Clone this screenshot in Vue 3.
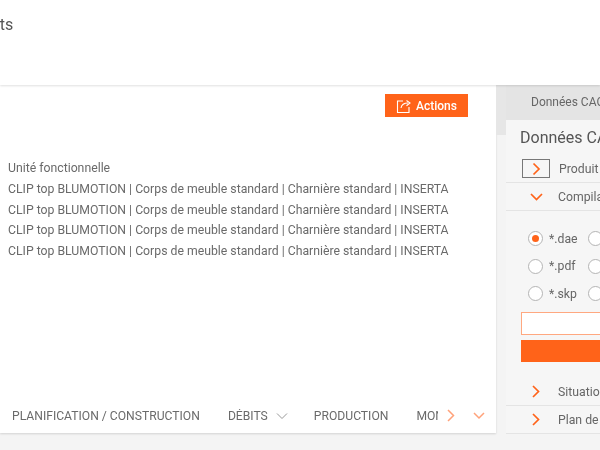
<script setup>
const rows = Array(4).fill('CLIP top BLUMOTION | Corps de meuble standard | Charnière standard | INSERTA')
const formats = ['*.dae', '*.pdf', '*.skp']
</script>

<template>
  <div class="page">
    <header class="top">
      <h1>Projets</h1>
    </header>
    <div class="body">
      <main class="card">
        <div class="toolbar">
          <button class="btn-actions">
            <svg width="16" height="16" viewBox="0 0 16 16" fill="none" stroke="#fff" stroke-width="1.1">
              <path d="M7 3H1.500v11.500H13V9" />
              <path d="M5 10c.5-3 2.500-5 7-5M10.500 2.500 14 5l-3.500 2.800" />
            </svg>
            Actions
          </button>
        </div>
        <div class="list">
          <div class="row">Unité fonctionnelle</div>
          <div v-for="(r, i) in rows" :key="i" class="row">{{ r }}</div>
        </div>
        <nav class="tabs">
          <div class="tab-scroll">
            <span class="tab">PLANIFICATION / CONSTRUCTION</span>
            <span class="tab with-caret">DÉBITS
              <svg width="12" height="8" viewBox="0 0 12 8" fill="none" stroke="#999" stroke-width="1"><path d="M1 1.500 6 6.500l5-5" /></svg>
            </span>
            <span class="tab">PRODUCTION</span>
            <span class="tab">MONTAGE</span>
          </div>
          <svg class="tab-next" width="8" height="13" viewBox="0 0 8 13" fill="none" stroke="#ffa27a" stroke-width="1.5"><path d="M1 1l5.500 5.500L1 12" /></svg>
          <svg class="tab-more" width="12" height="8" viewBox="0 0 12 8" fill="none" stroke="#ffa27a" stroke-width="1.5"><path d="M1 1l5 5 5-5" /></svg>
        </nav>
      </main>

      <div class="gutter"><div class="thumb"></div></div>

      <aside class="side">
        <div class="side-tabs"><span>Données CAO</span></div>
        <h2>Données CAO</h2>
        <div class="acc first">
          <span class="arrow-box">
            <svg width="9" height="14" viewBox="0 0 9 14" fill="none" stroke="#ff6319" stroke-width="1.700"><path d="M1.500 1.500 7 7l-5.500 5.500" /></svg>
          </span>
          <span class="acc-label">Produit sélectionné</span>
        </div>
        <div class="acc open">
          <span class="arrow">
            <svg width="13" height="8" viewBox="0 0 13 8" fill="none" stroke="#ff6319" stroke-width="1.700"><path d="M1 1l5.500 5.500L12 1" /></svg>
          </span>
          <span class="acc-label">Compilation</span>
        </div>
        <div class="radios">
          <div v-for="(f, i) in formats" :key="f" class="radio-row">
            <span class="radio" :class="{ on: i === 0 }"></span>
            <span class="radio-label">{{ f }}</span>
            <span class="radio"></span>
          </div>
        </div>
        <div class="name-input"></div>
        <div class="submit"></div>
        <div class="acc plain">
          <span class="arrow">
            <svg width="8" height="13" viewBox="0 0 8 13" fill="none" stroke="#ff6319" stroke-width="1.700"><path d="M1 1l5.500 5.500L1 12" /></svg>
          </span>
          <span class="acc-label">Situation de montage</span>
        </div>
        <div class="acc plain">
          <span class="arrow">
            <svg width="8" height="13" viewBox="0 0 8 13" fill="none" stroke="#ff6319" stroke-width="1.700"><path d="M1 1l5.500 5.500L1 12" /></svg>
          </span>
          <span class="acc-label">Plan de perçage</span>
        </div>
      </aside>
    </div>
  </div>
</template>

<style scoped>
.page {
  width: 600px;
  height: 450px;
  overflow: hidden;
  background: #f4f4f4;
  font-family: Roboto, "Liberation Sans", sans-serif;
  color: #666;
  filter: blur(0.45px);
}

.top {
  height: 85px;
  box-sizing: border-box;
  background: #fff;
  box-shadow: 0 1px 2px rgba(0, 0, 0, 0.12);
  position: relative;
  padding-top: 15px;
}
.top h1 {
  margin: 0 0 0 -37px;
  font-size: 16px;
  line-height: 20px;
  font-weight: 400;
  color: #555;
}

.body {
  display: flex;
  align-items: flex-start;
  width: 800px;
  height: 365px;
}

.card {
  width: 496px;
  height: 348px;
  flex: none;
  background: #fff;
  box-shadow: 0 1px 2px rgba(0, 0, 0, 0.14);
  display: flex;
  flex-direction: column;
}

.toolbar {
  display: flex;
  justify-content: flex-end;
  padding: 9px 28px 0 0;
}
.btn-actions {
  width: 83px;
  height: 23px;
  border: none;
  padding: 0;
  background: #ff6319;
  color: #fff;
  font: 500 12px Roboto, "Liberation Sans", sans-serif;
  display: flex;
  align-items: center;
  justify-content: center;
  gap: 4px;
}

.list {
  flex: 1;
  padding: 41px 0 0 8px;
}
.row {
  font-size: 12.25px;
  line-height: 20.750px;
  color: #6a6a6a;
  white-space: nowrap;
}

.tabs {
  height: 36px;
  box-sizing: border-box;
  padding-top: 1px;
  display: flex;
  align-items: center;
}
.tab-scroll {
  width: 438px;
  flex: none;
  overflow: hidden;
  display: flex;
  align-items: center;
  padding-left: 12px;
  box-sizing: border-box;
  gap: 28px;
}
.tab {
  font-size: 12.150px;
  color: #6a6a6a;
  white-space: nowrap;
  display: flex;
  align-items: center;
  gap: 8px;
}
.with-caret svg { margin-right: -2px; }
.tab-next { margin-left: 9px; }
.tab-more { margin-left: 18px; }

.gutter {
  width: 10px;
  flex: none;
  height: 60px;
}
.thumb {
  height: 50px;
  background: #e6e6e6;
}

.side {
  width: 200px;
  flex: none;
  background: #f6f6f6;
}
.side-tabs {
  height: 35px;
  box-sizing: border-box;
  padding: 0 0 2px 25px;
  background: #e4e4e4;
  display: flex;
  align-items: center;
  font-size: 12px;
  color: #666;
  white-space: nowrap;
}
.side h2 {
  margin: 0;
  padding: 8px 0 7px 14px;
  font-size: 16px;
  line-height: 20px;
  font-weight: 400;
  color: #555;
  white-space: nowrap;
}

.acc {
  display: flex;
  align-items: center;
  height: 27px;
  border-bottom: 1px solid #e4e4e4;
  font-size: 12.250px;
  color: #666;
  white-space: nowrap;
}
.arrow-box {
  width: 28px;
  height: 19px;
  margin-left: 16px;
  border: 1px solid #777;
  box-sizing: border-box;
  display: flex;
  align-items: center;
  justify-content: center;
}
.first .acc-label { margin-left: 9px; }
.arrow {
  width: 14px;
  flex: none;
  display: flex;
  justify-content: center;
  margin: 0 15px 0 23px;
}
.radios {
  padding: 14px 0 0 22px;
}
.radio-row {
  display: flex;
  align-items: center;
  height: 27.500px;
  font-size: 12.250px;
  color: #666;
}
.radio {
  width: 15px;
  height: 15px;
  flex: none;
  box-sizing: border-box;
  border: 1.500px solid #b4b4b4;
  border-radius: 50%;
  background: #fff;
  display: flex;
  align-items: center;
  justify-content: center;
}
.radio.on::after {
  content: "";
  width: 7px;
  height: 7px;
  border-radius: 50%;
  background: #ff6319;
}
.radio-label { width: 45px; padding-left: 6px; box-sizing: border-box; }
.name-input {
  height: 23px;
  margin: 4.500px 0 0 15px;
  box-sizing: border-box;
  border: 1px solid #ffa880;
  background: #fff;
}
.submit {
  height: 22px;
  margin: 5px 0 16px 15px;
  background: #ff6319;
}
</style>
